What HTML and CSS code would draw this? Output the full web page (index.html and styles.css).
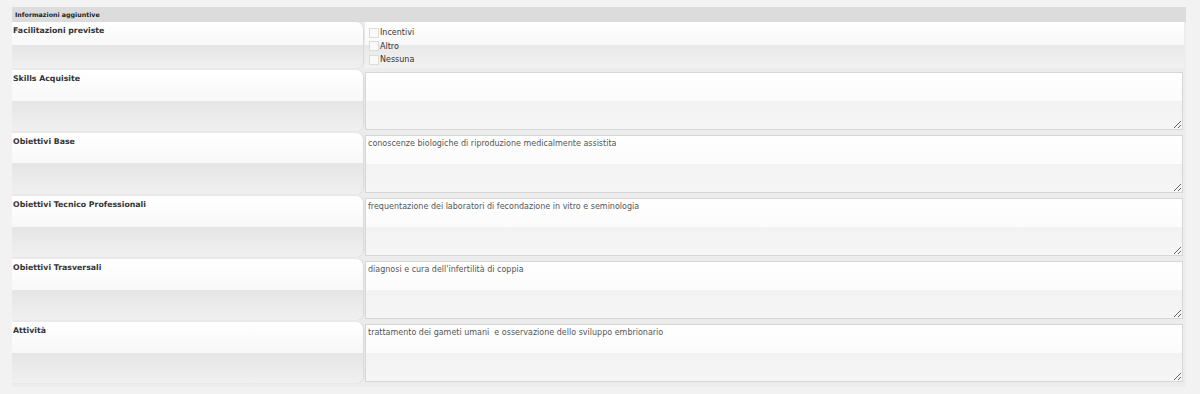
FILE: index.html
```html
<!DOCTYPE html>
<html>
<head>
    <meta charset='utf-8'>
    <title>Informazioni aggiuntive</title>
    <link rel="stylesheet" href="styles.css">
</head>
<body>
    <div class="div-panel">
        <div class="div-head">Informazioni aggiuntive</div>

        <div class="div-row div-row-first">
            <div class="div-label">Facilitazioni previste</div>
            <div class="div-value div-checks">
                <label><span class="box"></span>Incentivi</label>
                <label><span class="box"></span>Altro</label>
                <label><span class="box"></span>Nessuna</label>
            </div>
        </div>

        <div class="div-row">
            <div class="div-label">Skills Acquisite</div>
            <div class="div-value"><textarea></textarea></div>
        </div>

        <div class="div-row">
            <div class="div-label">Obiettivi Base</div>
            <div class="div-value"><textarea>conoscenze biologiche di riproduzione medicalmente assistita</textarea></div>
        </div>

        <div class="div-row">
            <div class="div-label">Obiettivi Tecnico Professionali</div>
            <div class="div-value"><textarea>frequentazione dei laboratori di fecondazione in vitro e seminologia</textarea></div>
        </div>

        <div class="div-row">
            <div class="div-label">Obiettivi Trasversali</div>
            <div class="div-value"><textarea>diagnosi e cura dell'infertilità di coppia</textarea></div>
        </div>

        <div class="div-row">
            <div class="div-label">Attività</div>
            <div class="div-value"><textarea>trattamento dei gameti umani  e osservazione dello sviluppo embrionario</textarea></div>
        </div>
    </div>
</body>
</html>
```

FILE: styles.css
```css
/* reset */
body {
    margin: 0;
    padding: 7px 14px 0 12px;
    background-color: #f2f2f2;
    font-family: "DejaVu Sans", Verdana, sans-serif;
    color: #333;
}

/* panel */
.div-panel {
    background-color: #ececec;
    padding-bottom: 4px;
}

.div-head {
    background-color: #dcdcdc;
    height: 15px;
    line-height: 15px;
    padding-left: 3px;
    font-size: 6.3px;
    font-weight: bold;
    color: #222;
}

.div-row {
    display: grid;
    grid-template-columns: 351px 1fr;
    column-gap: 2px;
    height: 61px;
    margin-top: 2px;
}

.div-row-first {
    height: 46px;
    margin-top: 0;
}

.div-label {
    background: linear-gradient(to bottom, #ffffff 0%, #f8f8f8 50%, #e5e5e5 50%, #f0f0f0 100%);
    border-radius: 0 7px 7px 0;
    box-shadow: 1px 0 1px #d8d8d8;
    padding: 4px 1px;
    font-size: 7.8px;
    font-weight: bold;
    color: #333;
}

.div-value {
    padding: 2px 3px 0 0;
}

.div-value textarea {
    display: block;
    box-sizing: border-box;
    width: 100%;
    height: 58px;
    margin: 0;
    border: 1px solid #d6d6d6;
    background: linear-gradient(to bottom, #ffffff 0%, #fbfbfb 50%, #f2f2f2 50%, #f6f6f6 100%);
    padding: 3px 2px;
    font-family: inherit;
    font-size: 8px;
    color: #555;
    resize: vertical;
}

.div-checks {
    background: linear-gradient(to bottom, #ffffff 0%, #f8f8f8 50%, #e8e8e8 50%, #f2f2f2 100%);
    padding: 4px 0 0 4px;
    margin-right: 2px;
}

.div-checks label {
    display: flex;
    align-items: center;
    height: 13.5px;
    font-size: 8px;
    color: #333;
}

.box {
    width: 8px;
    height: 8px;
    border: 1px solid #dcdcdc;
    background-color: #fafafa;
    margin-right: 1px;
}
```
